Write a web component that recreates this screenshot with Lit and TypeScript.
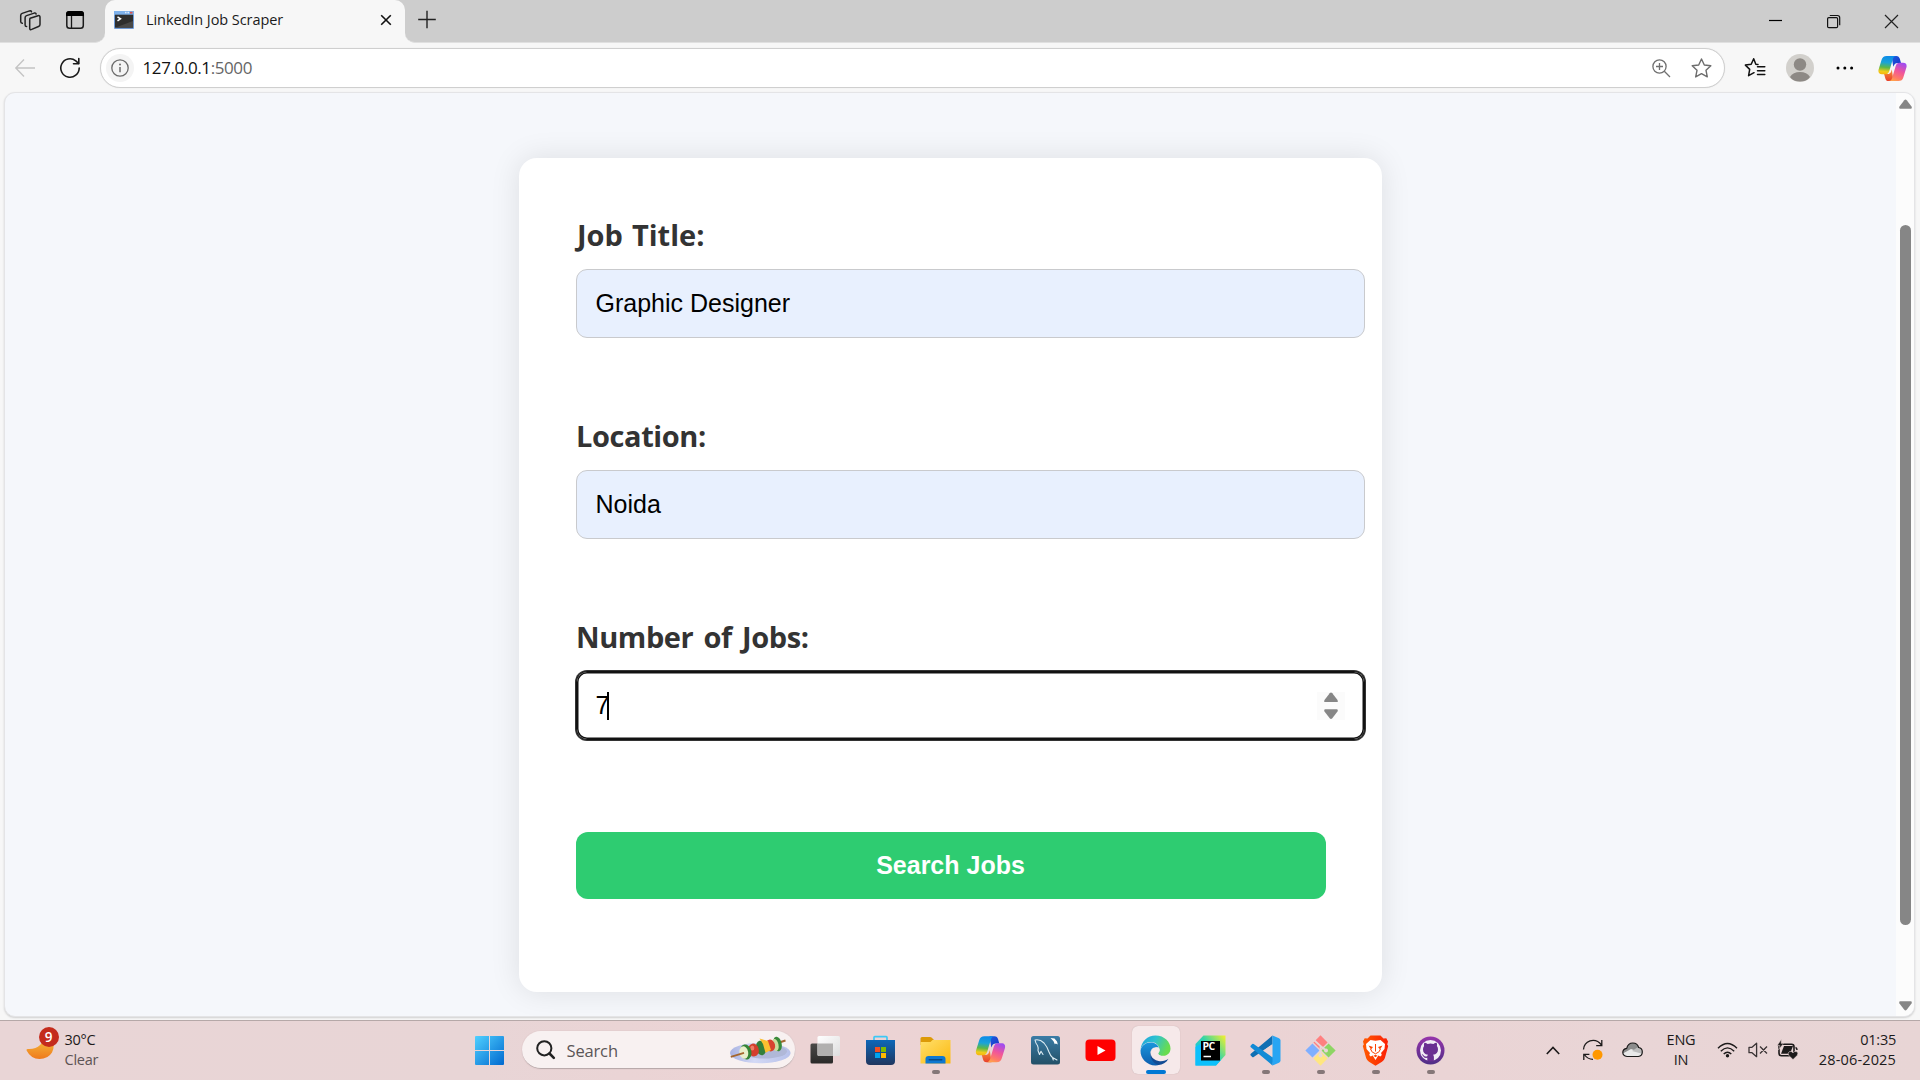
import { LitElement, html, css, svg, nothing } from "lit";
import { customElement, property } from "lit/decorators.js";

const copilot = (id: string) => svg`
  <defs>
    <linearGradient id="${id}a" x1="0.4" y1="0" x2="0.3" y2="1">
      <stop offset="0" stop-color="#0d8be8"/><stop offset=".35" stop-color="#1aa3d8"/>
      <stop offset=".62" stop-color="#5cb848"/><stop offset=".85" stop-color="#f2cb1b"/><stop offset="1" stop-color="#f5b50f"/>
    </linearGradient>
    <linearGradient id="${id}b" x1="0.7" y1="0" x2="0.3" y2="1">
      <stop offset="0" stop-color="#a04cf0"/><stop offset=".45" stop-color="#f0559b"/><stop offset=".8" stop-color="#ff7a68"/><stop offset="1" stop-color="#ffa24a"/>
    </linearGradient>
    <linearGradient id="${id}c" x1="0" y1="0" x2="1" y2="1">
      <stop offset="0" stop-color="#1c5be0"/><stop offset="1" stop-color="#1a35c4"/>
    </linearGradient>
    <linearGradient id="${id}d" x1="0" y1="0" x2="0" y2="1">
      <stop offset="0" stop-color="#f8933a"/><stop offset="1" stop-color="#e8402c"/>
    </linearGradient>
  </defs>
  <path d="M14 1h5c2 0 3 1 3.600 3l1.200 4.200h-3.300c-2.500 0-3.500 1-4.200 3l-.5 1z" fill="url(#${id}c)"/>
  <path d="M16 27h-5c-2 0-3-1-3.500-3l-1.200-4.200h3.400c2.300 0 3.300-1.200 4-3l.6-2z" fill="url(#${id}d)"/>
  <path d="M9 1h10c-2 0-3 1.300-3.600 3.200L11.700 16.500c-.8 2.500-2 3.500-4.200 3.500H4c-3 0-4.200-2-3.400-5L3.700 5C4.500 2.300 6 1 9 1z" fill="url(#${id}a)"/>
  <path d="M21 27H11c2 0 3-1.300 3.600-3.200l3.700-12.300C19.100 9 20.300 8 22.500 8H26c3 0 4.200 2 3.400 5l-3.100 10c-.8 2.700-2.300 4-5.300 4z" fill="url(#${id}b)"/>`;

const caretUp = (w: number, h: number) => html`<svg width=${w} height=${h} viewBox="0 0 14 10"><path d="M5.700 1Q7 -.6 8.300 1L13.500 7.800Q14.400 10 12.600 10H1.400Q-.4 10 .5 7.800z" fill="#868686"/></svg>`;
const caretDown = (w: number, h: number) => html`<svg width=${w} height=${h} viewBox="0 0 14 10"><path d="M5.700 9Q7 10.600 8.300 9L13.500 2.200Q14.400 0 12.600 0H1.400Q-.4 0 .5 2.200z" fill="#868686"/></svg>`;

@customElement("title-bar")
class TitleBar extends LitElement {
  static styles = css`
    :host { display: flex; height: 43px; background: #cdcdcd; box-sizing: border-box; align-items: flex-start;
      font-family: "Open Sans", "Noto Sans", sans-serif; }
    svg { display: block; flex: none; }
    .left { width: 105px; height: 43px; display: flex; background: #cdcdcd; border-bottom: 1px solid #e0e0e0;
      border-bottom-right-radius: 10px; box-sizing: border-box; padding: 9px 0 0 19px; gap: 23px; }
    .under { background: #f7f7f7; height: 43px; display: flex; }
    .tab { width: 300px; height: 43px; background: #f7f7f7; border-radius: 10px 10px 0 0; display: flex; align-items: center;
      padding: 0 13px 3px 9px; box-sizing: border-box; }
    .tabwrap { background: #cdcdcd; }
    .name { font-size: 14.500px; letter-spacing: -.07px; color: #1b1b1b; margin-left: 12px; flex: 1; white-space: nowrap; padding-bottom: 2px; }
    .rest { flex: 1; background: #f7f7f7; height: 43px; }
    .fill { background: #cdcdcd; border-bottom-left-radius: 10px; border-bottom: 1px solid #e0e0e0; height: 43px; box-sizing: border-box;
      display: flex; align-items: flex-start; padding: 10px 21px 0 12px; }
    .grow { flex: 1; }
    .win { display: flex; gap: 43px; padding-top: 4px; }
  `;
  render() {
    return html`
      <div class="under"><div class="left">
        <svg width="23" height="23" viewBox="0 0 23 23" fill="none" stroke="#222" stroke-width="1.500" stroke-linejoin="round" stroke-linecap="round">
          <path d="M11.200 9.200l7.800-2.500q2-.5 2 1.500v7.300q0 1.500-1.500 2l-6.800 2.900q-2 .8-2-1.200v-7.900q0-1.700.5-2.100z"/>
          <path d="M7.600 17.600q-1.500 0-1.500-1.600V8.700q0-1.500 1.500-2.100l7.600-2.500q1.700-.4 1.900 1"/>
          <path d="M3.300 14.300q-1.600-.2-1.600-1.700V6.500q0-1.500 1.500-2.100l7.300-2.500q1.600-.4 2 .8"/>
        </svg>
        <svg width="20" height="22" viewBox="0 0 20 22"><rect x="1.800" y="2.800" width="16.500" height="16.500" rx="2.800" fill="none" stroke="#1a1a1a" stroke-width="1.500"/><path d="M1 7V5q0-3 3-3h12q3 0 3 3v2z" fill="#000"/><path d="M6.500 7v12" stroke="#1a1a1a" stroke-width="1.300"/></svg>
      </div></div>
      <div class="tabwrap"><div class="tab">
        <svg width="20" height="18" viewBox="0 0 20 18"><rect width="20" height="18" rx="1" fill="#6f9ad6"/><rect width="20" height="4" fill="#7db0ea"/><rect x="16" y=".8" width="2.500" height="1.800" fill="#d9534f"/><rect x="11" y=".8" width="1.500" height="1.500" fill="#dbe9fa"/><rect x="13.500" y=".8" width="1.500" height="1.500" fill="#dbe9fa"/><rect x="1" y="3.700" width="18" height="13" fill="#2e2e2e"/><path d="M1 16.700h18V10z" fill="#484848"/><path d="M3.500 5.800l3 2-3 2" stroke="#fff" stroke-width="1.500" fill="none"/></svg>
        <span class="name">LinkedIn Job Scraper</span>
        <svg width="12" height="12" viewBox="0 0 12 12"><path d="M1.200 1.200l9.600 9.600M10.800 1.200L1.200 10.800" stroke="#111" stroke-width="1.600"/></svg>
      </div></div>
      <div class="rest"><div class="fill">
        <svg width="20" height="20" viewBox="0 0 20 20"><path d="M1.200 9.500h17.600M10 .8v17.400" stroke="#222" stroke-width="1.400"/></svg>
        <div class="grow"></div>
        <div class="win">
          <svg width="15" height="15" viewBox="0 0 15 15"><path d="M1 6.500h13" stroke="#000" stroke-width="1.200"/></svg>
          <svg width="15" height="15" viewBox="0 0 15 15" fill="none" stroke="#111" stroke-width="1.200"><rect x="1.600" y="3.600" width="10" height="10" rx="1.200"/><path d="M3.800 1.500h7.700q2.200 0 2.200 2.200v7.500"/></svg>
          <svg width="15" height="15" viewBox="0 0 15 15"><path d="M1 1l13 13M14 1L1 14" stroke="#222" stroke-width="1.200"/></svg>
        </div>
      </div></div>`;
  }
}

@customElement("tool-bar")
class ToolBar extends LitElement {
  static styles = css`
    :host { display: flex; height: 49px; padding: 5px 13px 4px 14px; box-sizing: border-box; background: #f7f7f7; align-items: center;
      font-family: "Open Sans", "Noto Sans", sans-serif; }
    svg { display: block; flex: none; }
    .reload { margin: 0 19px 0 23px; }
    .bar { flex: 1; height: 40px; box-sizing: border-box; border: 1px solid #cfcfcf; border-radius: 20px; background: #fff; display: flex;
      align-items: center; padding: 0 12px 0 5px; box-shadow: 0 0 1px #ddd; }
    .info { width: 28px; height: 28px; border-radius: 50%; background: #f4f4f4; display: flex; align-items: center; justify-content: center; }
    .url { font-size: 17px; letter-spacing: -.4px; color: #111; margin-left: 8.500px; flex: 1; padding-bottom: 1px; }
    .port { color: #666; }
    .star { margin-left: 20px; }
    .fav { margin-left: 19px; } .avatar { margin-left: 20px; } .dots { margin-left: 21px; } .cop { margin-left: 23px; }
  `;
  render() {
    return html`
      <svg width="22" height="20" viewBox="0 0 22 20"><path d="M21 10H2M10 1.500L1.800 10l8.200 8.500" fill="none" stroke="#c4c4c4" stroke-width="1.400"/></svg>
      <svg class="reload" width="22" height="22" viewBox="0 0 22 22" fill="none" stroke="#1a1a1a" stroke-width="1.600" stroke-linecap="round" stroke-linejoin="round"><path d="M20.200 11a9.200 9.200 0 1 1-3.400-7.100L19.500 6.300"/><path d="M19.800 1.500v5.200h-5.300"/></svg>
      <div class="bar">
        <div class="info"><svg width="18" height="18" viewBox="0 0 18 18"><circle cx="9" cy="9" r="8.200" fill="none" stroke="#6b6b6b" stroke-width="1.300"/><circle cx="9" cy="5.500" r="1" fill="#6b6b6b"/><path d="M9 8v5.200" stroke="#6b6b6b" stroke-width="1.500"/></svg></div>
        <div class="url">127.0.0.1<span class="port">:5000</span></div>
        <svg width="19" height="19" viewBox="0 0 19 19" fill="none" stroke="#707070" stroke-width="1.300"><circle cx="7.500" cy="7.500" r="6.600"/><path d="M12.300 12.300l5.700 5.700M7.500 4v7M4 7.500h7"/></svg>
        <svg class="star" width="21" height="20" viewBox="0 0 21 20" fill="none" stroke="#6d6d6d" stroke-width="1.400" stroke-linejoin="round"><path d="M10.500 1l2.800 6 6.500.8-4.800 4.500 1.300 6.600-5.800-3.200-5.800 3.200L6 12.300 1.200 7.800 7.700 7z"/></svg>
      </div>
      <svg class="fav" width="22" height="20" viewBox="0 0 22 20" fill="none" stroke="#111" stroke-width="1.500" stroke-linejoin="round" stroke-linecap="round"><path d="M14 7L11.800 6.700 9.700 1.300 7.200 6.700 1.400 7.600 5.700 11.900 4.600 18.200 10 15.200M13.500 9.300h7.300M13.500 13.300h7.300M13.500 17h7.300" transform="translate(0 -.5)"/></svg>
      <svg class="avatar" width="28" height="28" viewBox="0 0 28 28"><clipPath id="av"><circle cx="14" cy="14" r="14"/></clipPath><g clip-path="url(#av)"><rect width="28" height="28" fill="#d2d0cc"/><circle cx="14" cy="10.500" r="6.200" fill="#8d8985"/><path d="M4 23q3-5 10-5t10 5q-3 4.500-10 4.500T4 23z" fill="#8d8985"/></g></svg>
      <svg class="dots" width="20" height="6" viewBox="0 0 20 6"><circle cx="3" cy="3" r="1.500"/><circle cx="9.800" cy="3" r="1.500"/><circle cx="16.600" cy="3" r="1.500"/></svg>
      <svg class="cop" width="29" height="27" viewBox="0 0 30 28">${copilot("tb")}</svg>`;
  }
}

@customElement("form-field")
class FormField extends LitElement {
  @property() label = "";
  @property() value = "";
  @property() kind = "filled";
  static styles = css`
    :host { display: block; height: 201px; }
    .label { font: 700 29px/40px "Open Sans", "Noto Sans", sans-serif; color: #333; height: 54px; letter-spacing: -.4px; word-spacing: 3px; white-space: nowrap; }
    :host([wide]) .label { letter-spacing: 0; word-spacing: 1.500px; padding-left: 1px; }
    .box { width: 789px; height: 69px; box-sizing: border-box; border: 1px solid #c9cacd; border-radius: 11px; background: #e8f0fe;
      display: flex; align-items: center; padding: 0 19px 0 18.500px; font: 25px "Liberation Sans", Arial, sans-serif; color: #000; }
    .focus { background: #fff; border-color: #111; box-shadow: 0 0 0 1px #333, inset 0 0 0 1.500px #111; }
    .caret { width: 2px; height: 28px; background: #000; margin-left: -2px; }
    .spin { margin-left: auto; width: 28px; height: 28px; background: #fbfbfb; display: flex; flex-direction: column; align-items: center; justify-content: space-between; }
  `;
  render() {
    const focus = this.kind === "focus";
    return html`<div class="label">${this.label}</div>
      <div class="box ${focus ? "focus" : ""}">${this.value}${focus
        ? html`<span class="caret"></span><span class="spin">${caretUp(14, 10.500)}${caretDown(14, 10.500)}</span>` : nothing}</div>`;
  }
}

@customElement("job-page")
class JobPage extends LitElement {
  static styles = css`
    :host { display: flex; flex: 1; margin: 0 5px 3px 4px; box-sizing: border-box; border: 1px solid #e4e4e6; border-radius: 11px;
      overflow: hidden; background: #f5f7fb; box-shadow: 0 1px 2px #d0d0d0; }
    .body { flex: 1; display: flex; justify-content: center; align-items: flex-start; padding-top: 65px; }
    .card { width: 863px; height: 834px; box-sizing: border-box; border-radius: 18px; background: #fff; padding: 57px;
      box-shadow: 0 0 30px rgba(0, 0, 0, .1); }
    .btn { height: 67px; width: 750px; border-radius: 12px; background: #2ecc71; color: #fff; display: flex; align-items: center; justify-content: center;
      font: 700 25px "Liberation Sans", Arial, sans-serif; margin-top: 14px; padding-right: 1px; box-sizing: border-box; }
    .scroll { width: 18px; background: #fcfcfc; display: flex; flex-direction: column; align-items: center; padding: 6px 0 5px; box-sizing: border-box; }
    .thumb { width: 11px; height: 700px; border-radius: 5.500px; background: #868686; margin-top: 116px; }
    .space { flex: 1; }
  `;
  render() {
    return html`
      <div class="body"><div class="card">
        <form-field wide label="Job Title:" value="Graphic Designer"></form-field>
        <form-field label="Location:" value="Noida"></form-field>
        <form-field label="Number of Jobs:" value="7" kind="focus"></form-field>
        <div class="btn">Search Jobs</div>
      </div></div>
      <div class="scroll">${caretUp(13, 10)}<div class="thumb"></div><div class="space"></div>${caretDown(13, 10)}</div>`;
  }
}

const apps = [
  { run: "", icon: svg`<defs><linearGradient id="tv" x1="0" y1="0" x2="0" y2="1"><stop offset="0" stop-color="#4b4a48"/><stop offset="1" stop-color="#2a2a29"/></linearGradient><linearGradient id="tw" x1="0" y1="0" x2="1" y2="1"><stop offset="0" stop-color="#fff"/><stop offset="1" stop-color="#dedede"/></linearGradient></defs><rect x=".5" y="8.500" width="22.500" height="20" rx="1.500" fill="url(#tv)"/><rect x="7.500" y="1" width="22.500" height="20" rx="1.500" fill="url(#tw)"/><path d="M7.500 8.500H23V21H9q-1.500 0-1.500-1.500z" fill="#b1b0af"/>` },
  { run: "", icon: svg`<defs><linearGradient id="st" x1="0" y1="0" x2="0" y2="1"><stop offset="0" stop-color="#0d67b8"/><stop offset="1" stop-color="#20365f"/></linearGradient></defs><path d="M9 6V2.500q0-.8.800-.8h11.400q.8 0 .8.800V6" fill="none" stroke="#3ec8f5" stroke-width="1.700"/><path d="M1 5h29v21q0 4-4 4H5q-4 0-4-4z" fill="url(#st)"/><path d="M10 12h5v5h-5z" fill="#f25022"/><path d="M16 12h5v5h-5z" fill="#7fba00"/><path d="M10 18h5v5h-5z" fill="#00a4ef"/><path d="M16 18h5v5h-5z" fill="#ffb900"/>` },
  { run: "run", icon: svg`<defs><linearGradient id="fo" x1="0" y1="0" x2="1" y2="1"><stop offset="0" stop-color="#ffdf6b"/><stop offset="1" stop-color="#fcb90f"/></linearGradient></defs><path d="M.5 10V3.500Q.5 2 2 2h8q1 0 1.800.8L14 5l-3 5z" fill="#dc9a08"/><path d="M.5 7h10l2-2h18v23.500H.5z" fill="url(#fo)"/><path d="M5.500 28.500V24q0-3 3-3h14q3 0 3 3v4.500z" fill="#0f78d0"/><rect x="8.500" y="24" width="14" height="1.500" rx=".7" fill="#0a4a86"/>` },
  { run: "", icon: svg`<g transform="translate(.5 .3)">${copilot("tk")}</g>` },
  { run: "", icon: svg`<defs><linearGradient id="my" x1="0" y1="0" x2="0" y2="1"><stop offset="0" stop-color="#3a7ca6"/><stop offset="1" stop-color="#235067"/></linearGradient></defs><rect x="1" y="1" width="29" height="28.500" rx="2.500" fill="url(#my)"/><g fill="none" stroke="#dcebf2" stroke-width="1.100" stroke-linejoin="round" stroke-linecap="round"><path d="M5 5q5-1 9 3 3.500 4 5 9 1.500 4 3.500 5.500l4.500 2.500M5 5q.5 3 2.500 5.500 1 2 .5 5l1.500 4 1.500-3.200 2 3.200M22.500 22.500l.8 2.500"/></g><path d="M20.500 3l4 .5 2.500 3 .8 3-2-1-1 .8-1.300-3z" fill="#fff"/>` },
  { run: "", icon: svg`<rect x=".5" y="4.500" width="30" height="21.500" rx="4" fill="#f00"/><path d="M12.500 11v9l8-4.500z" fill="#fff"/>` },
  { run: "active", icon: svg`<defs>
      <linearGradient id="e1" x1="0" y1="0" x2="1" y2=".35"><stop offset="0" stop-color="#1d9fdc"/><stop offset=".5" stop-color="#2fc2d0"/><stop offset="1" stop-color="#68dc50"/></linearGradient>
      <linearGradient id="e2" x1="0" y1="0" x2="0" y2="1"><stop offset="0" stop-color="#1b96dc"/><stop offset="1" stop-color="#0c5dae"/></linearGradient></defs>
      <path d="M.6 14.500C1.300 6.500 7.500.5 15.500.5 24.500.5 30.500 7 30.500 13.500c0 4.200-3 7.300-7 7.300-3.800 0-5.600-1.600-5.200-2.900 1-1 1.400-2 1.300-3.400C19.300 10.500 15.500 7 10.800 7 6 7 2 9.800.6 14.500z" fill="url(#e1)"/>
      <path d="M.5 15.500C1.500 10.500 5.500 7.500 10.500 7.500c4 0 7.200 2 8.300 5-6-1.500-9.300 2.500-8.300 7.500.9 4.500 4.500 8.500 9.500 9.600-1.500.6-3 .9-4.500.9C7 30.500.2 23.500.5 15.500z" fill="url(#e2)"/>
      <path d="M12 14.300c-3 3.700-.8 10.400 6.500 11.700 4 .7 7.500-.5 10-2.300-2.300 4-6 6.200-10 6.300C11.500 28 8 20 12 14.300z" fill="#124c94"/>
      <path d="M19.500 14.500c-.5-1.600-2-2.300-3.500-2-2.500.5-4.200 3-3.600 6 .8 3.700 5 5.500 9 4.800 2.600-.4 5-1.200 7.800-3-4.700 1.900-11.900.9-11-2.300 1-.9 1.500-2 1.300-3.500z" fill="#f6e9ea"/>` },
  { run: "", icon: svg`<defs><linearGradient id="pc" x1="0" y1=".8" x2="1" y2="0"><stop offset="0" stop-color="#12bff5"/><stop offset=".5" stop-color="#32d4a8"/><stop offset="1" stop-color="#f8f02a"/></linearGradient></defs><path d="M8.500 .5h22V20l-9.500 10.500H.5V9z" fill="url(#pc)"/><path d="M.5 12L8 7v18h18l-5 5.500H.5z" fill="#0cc0fb"/><path d="M6 6h19v19.500H6z"/><text x="7.500" y="15" font-family="Open Sans, sans-serif" font-weight="700" font-size="10.500" fill="#fff" letter-spacing="-.5">PC</text><path d="M8.500 21.500h7.500" stroke="#fff" stroke-width="1.500"/>` },
  { run: "run", icon: svg`<path d="M22.500 30.500L23.500 8.500 3.700 21.900q-.8.500-1.500 0L.8 20.500q-.8-.9 0-1.700L22.500.5z" fill="#0f6fb3"/><path d="M23.500 8.500L13.500 15.500l10 7z" fill="#ebd4d5"/><path d="M.8 10.500L2.200 9.100q.7-.5 1.500 0l19.800 14-1 7.400L.8 12.200q-.8-.9 0-1.700z" fill="#128bd6"/><path d="M22.500.5l6.500 2.800q1.500.7 1.500 2.200v20q0 1.500-1.500 2.200l-6.500 2.800z" fill="#28a5f3"/>` },
  { run: "run", icon: svg`<g transform="rotate(45 15.500 15.500)"><rect x="4.800" y="4.800" width="10" height="10" fill="#ff8080"/><rect x="16.200" y="4.800" width="10" height="10" fill="#8ed564"/><rect x="4.800" y="16.200" width="10" height="10" fill="#7fafff"/><rect x="16.200" y="16.200" width="10" height="10" fill="#ffe680"/></g><path d="M9.500 5.500l6 5.500v9M15.500 11l5.500 4.500" stroke="#e9d6d8" stroke-width="1.800" fill="none"/><circle cx="21" cy="15.500" r="2" fill="#e9d6d8"/><circle cx="15.500" cy="20.500" r="2" fill="#e9d6d8"/>` },
  { run: "run", icon: svg`<defs><linearGradient id="br" x1="0" y1="0" x2="1" y2="0"><stop offset="0" stop-color="#ff5a00"/><stop offset="1" stop-color="#fb1f06"/></linearGradient></defs><path d="M10.500.5h10L23.500 3.500l2.800-.3L28 6.500l-.8 3 1 1.500-3.300 12q-.7 2.300-2.900 3.700l-6.500 4-6.500-4q-2.200-1.400-2.900-3.700L2.800 11l1-1.500-.8-3 1.700-3.300 2.800.3z" fill="url(#br)"/><path d="M10.500 5l5 .8 5-.8 4.500 4-.5 5-3.500 4 .8 2-1.500 1.500-2-1-2.800 4.500-2.800-4.500-2 1L9.200 20l.8-2-3.500-4L6 9z" fill="#fff"/><path d="M8.500 10.500l4.500 1.500-2 2.500zM22.500 10.500L18 12l2 2.500z" fill="#fc4402"/><path d="M15.500 9v7.500M12.800 17.300l2.700 1.500 2.700-1.500M10.500 14l2 3.500M20.500 14l-2 3.500" stroke="#fc4402" stroke-width="1" fill="none"/><path d="M13.500 20.800l2-1 2 1-2 1.500z" fill="#fc4402"/>` },
  { run: "run", icon: svg`<defs><linearGradient id="gh" x1="0" y1="0" x2="0" y2="1"><stop offset="0" stop-color="#9635ab"/><stop offset="1" stop-color="#4f2e86"/></linearGradient></defs><circle cx="15.500" cy="15.500" r="14" fill="url(#gh)"/><circle cx="15.500" cy="15.500" r="10.500" fill="#f2edf6"/><path d="M12.300 25.800v-3q-3.300.7-4.300-1.800-.5-1-1.300-1.500.8-.5 1.800.7 1.500 2 3.700 1 .2-1 .8-1.500c-3.500-.5-5-2.300-5-5.500q0-1.800 1.100-3.200-.5-1.800.3-3.200 1.600 0 3.200 1.200 3-.8 5.800 0 1.600-1.200 3.200-1.200.8 1.400.3 3.200 1.100 1.400 1.100 3.200c0 3.200-1.500 5-5 5.500q.9.900.9 2.200v3.900q-3.300 1-6.600 0z" fill="#6a2f92"/>` },
];

@customElement("task-bar")
class TaskBar extends LitElement {
  static styles = css`
    :host { display: flex; height: 60px; box-sizing: border-box; border-top: 1px solid #b5a8a8; align-items: center; padding-bottom: 1px;
      background: linear-gradient(90deg, #e9d5d6 0, #e8d5d6 25%, #ecd3d4 40%, #ebd3d4 65%, #e9d5d6 85%, #e8d5d5 100%);
      font-family: "Open Sans", "Noto Sans", sans-serif; color: #1c1a1a; }
    svg { display: block; flex: none; overflow: visible; }
    .left { width: 475px; display: flex; box-sizing: border-box; padding-left: 26px; }
    .moon { position: relative; width: 38.500px; height: 36px; }
    .badge { position: absolute; left: 12.500px; top: -3px; width: 20px; height: 20px; border-radius: 50%; background: #c42b1c; color: #fff;
      font-size: 13.500px; font-weight: 600; line-height: 20px; text-align: center; }
    .two { font-size: 14.500px; line-height: 20px; letter-spacing: -.25px; white-space: nowrap; padding-bottom: 1px; }
    .dim { color: #5c5354; }
    .search { width: 273px; height: 38px; border-radius: 19px; background: #f8f1f1; border-bottom: 1px solid #b9aaab; box-sizing: border-box;
      margin: 0 7px 0 17.500px; display: flex; align-items: center; padding: 0 4px 0 14px; box-shadow: 0 0 0 1px #e4cfd0; }
    .ph { font-size: 16.500px; color: #5b5657; margin-left: 12px; flex: 1; letter-spacing: -.15px; padding-top: 1px; }
    .apps { display: flex; gap: 7px; }
    .app { width: 48px; height: 48px; border-radius: 6px; display: flex; flex-direction: column; align-items: center; padding-top: 9px; box-sizing: border-box; }
    .active { background: #f6e9ea; box-shadow: 0 0 1px #b9a6a7; }
    .mark { width: 8px; height: 4px; border-radius: 2px; background: #857778; margin-top: 4px; }
    .active .mark { width: 20px; background: #0078d4; }
    .tray { flex: 1; display: flex; align-items: center; justify-content: flex-end; padding-right: 24px; }
    .cloud { margin: 0 23px 0 18px; } .sync { margin-left: 22px; }
    .center { text-align: center; } .right { text-align: right; }
    .lang { width: 30px; }
    .wifi { margin-left: 21px; } .vol { margin-left: 10px; } .bat { margin-left: 9px; margin-right: 1px; }
    .clock { width: 97px; display: flex; flex-direction: column; align-items: flex-end; }
    .date { letter-spacing: .15px; }
  `;
  render() {
    return html`
      <div class="left">
        <div class="moon">
          <svg width="30" height="36" viewBox="0 0 30 36"><defs><linearGradient id="mo" x1="0" y1="0" x2="0" y2="1"><stop offset="0" stop-color="#f5bd3c"/><stop offset="1" stop-color="#ef7a1c"/></linearGradient></defs><path d="M25.500 9.500q4 6.500.5 13-4 6.500-12.500 6.500T.6 20.500q-.6-1.500 1-1.500 8 .5 12.500-4 3.500-3.500 3-7z" fill="url(#mo)"/></svg>
          <div class="badge">9</div>
        </div>
        <div class="two"><div>30°C</div><div class="dim">Clear</div></div>
      </div>
      <svg width="29" height="29" viewBox="0 0 29 29"><defs><linearGradient id="wi" x1="0" y1="0" x2="1" y2="1"><stop offset="0" stop-color="#50d0ff"/><stop offset="1" stop-color="#0069cf"/></linearGradient></defs><path d="M1 0h13v14H0V1q0-1 1-1zM15 0h13q1 0 1 1v13H15zM0 15h14v14H1q-1 0-1-1zM15 15h14v13q0 1-1 1H15z" fill="url(#wi)"/></svg>
      <div class="search">
        <svg width="19" height="19" viewBox="0 0 19 19" fill="none" stroke="#222"><circle cx="8.300" cy="8.300" r="7.100" stroke-width="2"/><path d="M13.500 13.500l4.300 4.300" stroke-width="2.600" stroke-linecap="round"/></svg>
        <span class="ph">Search</span>
        <svg width="61" height="28" viewBox="0 0 61 28">
          <defs><linearGradient id="pl" x1="0" y1="0" x2="1" y2="0"><stop offset="0" stop-color="#a9b3e2"/><stop offset=".4" stop-color="#d3d9f5"/><stop offset="1" stop-color="#b7c1ea"/></linearGradient></defs>
          <ellipse cx="30.300" cy="17" rx="30.300" ry="10.300" fill="url(#pl)"/><ellipse cx="34" cy="15.500" rx="23" ry="7" fill="#b0b8d8"/>
          <path d="M46 7.500L55.500 4.500" stroke="#a5672f" stroke-width="1.900"/>
          <ellipse cx="47.500" cy="8" rx="4.200" ry="7.300" transform="rotate(-12 47.500 8)" fill="#3a8a3a"/>
          <ellipse cx="45.300" cy="9" rx="3.200" ry="6.200" transform="rotate(-12 45.300 9)" fill="#cddc9c"/>
          <ellipse cx="40.300" cy="9.500" rx="4.800" ry="6" transform="rotate(-12 40.300 9.500)" fill="#d9432f"/>
          <ellipse cx="31" cy="12" rx="5" ry="7.300" transform="rotate(-12 31 12)" fill="#33803a"/>
          <path d="M29.500 2.500L38 5l3 9-5.500 2.800L33 8z" fill="#fbbf30"/>
          <ellipse cx="23.500" cy="14" rx="5.300" ry="6.500" transform="rotate(-12 23.500 14)" fill="#d43e2c"/>
          <ellipse cx="22.300" cy="12" rx="2" ry="2.600" fill="#ee7c66"/>
          <ellipse cx="15.800" cy="16" rx="5.600" ry="7.600" transform="rotate(-12 15.800 16)" fill="#358536"/>
          <ellipse cx="13.800" cy="16.600" rx="4.400" ry="6.300" transform="rotate(-12 13.800 16.600)" fill="#e9efca"/>
          <path d="M.8 20.800L14 16.800" stroke="#a5672f" stroke-width="1.900"/>
        </svg>
      </div>
      <div class="apps">${apps.map(a => html`<div class="app ${a.run === "active" ? "active" : ""}"><svg width="31" height="31" viewBox="0 0 31 31">${a.icon}</svg>${a.run ? html`<span class="mark"></span>` : nothing}</div>`)}</div>
      <div class="tray">
        <svg width="14" height="9" viewBox="0 0 14 9"><path d="M.8 8L7 1.500 13.200 8" fill="none" stroke="#1c1a1a" stroke-width="1.600"/></svg>
        <svg class="sync" width="22" height="22" viewBox="0 0 22 22" fill="none" stroke="#1c1a1a" stroke-width="1.300"><path d="M1.500 10.500Q2 4 8 1.900q7-1.900 11.500 4.100M19.800 1v5.600h-5.600M11 20.300q-5.500 0-8.600-4.800M1.800 21v-5.600h5.600"/><circle cx="15.500" cy="15.800" r="5" fill="#ff9800" stroke="none"/></svg>
        <svg class="cloud" width="21" height="16" viewBox="0 0 21 16"><clipPath id="cc"><path d="M5 14.500Q.8 14 .8 10.300.8 7 4.700 6.300 6 1 10.800 1q4.700 0 5.800 4.500 3.700.5 3.700 4.500t-4 4.500z"/></clipPath><g clip-path="url(#cc)"><rect width="21" height="16" fill="#e9e9e9"/><path d="M0 0h21v11L9 7 0 12z" fill="#8c8c8c"/><path d="M10 9l6-4 5 1v6z" fill="#bdbdbd"/></g><path d="M5 14.500Q.8 14 .8 10.300.8 7 4.700 6.300 6 1 10.800 1q4.700 0 5.800 4.500 3.700.5 3.700 4.500t-4 4.500z" fill="none" stroke="#1c1a1a" stroke-width="1.200"/></svg>
        <div class="two center lang"><div>ENG</div><div>IN</div></div>
        <svg class="wifi" width="21" height="16" viewBox="0 0 21 16" fill="none" stroke="#1c1a1a" stroke-width="1.400"><path d="M1 6.200q9.500-9.500 19 0M3.800 9.200q6.700-6.700 13.400 0M6.700 12q3.800-3.700 7.600 0"/><circle cx="10.500" cy="13.700" r="1.700" fill="#1c1a1a" stroke="none"/></svg>
        <svg class="vol" width="20" height="16" viewBox="0 0 20 16" fill="none" stroke="#3a3435" stroke-width="1.300" stroke-linejoin="round"><path d="M1 5.300h3l4.600-4v13.400l-4.600-4H1zM12 4.500l7 7M19 4.500l-7 7"/></svg>
        <svg class="bat" width="21" height="20" viewBox="0 0 21 20"><rect x="2" y="4.300" width="15" height="11.500" rx="2.500" fill="none" stroke="#1c1a1a" stroke-width="1.600"/><path d="M18.500 7.500q1.500.5 1.500 2.500" stroke="#1c1a1a" stroke-width="1.500" fill="none"/><path d="M7 6h9l-3 7.800H4z" fill="#1c1a1a"/><path d="M4.200-.5L.3 5.500H3L1.500 9.800l5-6.300H4.200z" fill="#1c1a1a" stroke="#e8d5d5" stroke-width=".5"/><path d="M16 19.600l-4.400-4.300q-1.300-2.500.8-3.700 2.100-.7 3.600 1.200 1.500-1.900 3.600-1.200 2.100 1.200.8 3.700z" fill="#1c1a1a" stroke="#e8d5d5" stroke-width=".6"/></svg>
        <div class="two right clock"><div>01:35</div><div class="date">28-06-2025</div></div>
      </div>`;
  }
}

@customElement("app-root")
class AppRoot extends LitElement {
  static styles = css`
    :host { display: flex; flex-direction: column; width: 1920px; height: 1080px; background: #f7f7f7; overflow: hidden; }
  `;
  render() {
    return html`<title-bar></title-bar><tool-bar></tool-bar><job-page></job-page><task-bar></task-bar>`;
  }
}
